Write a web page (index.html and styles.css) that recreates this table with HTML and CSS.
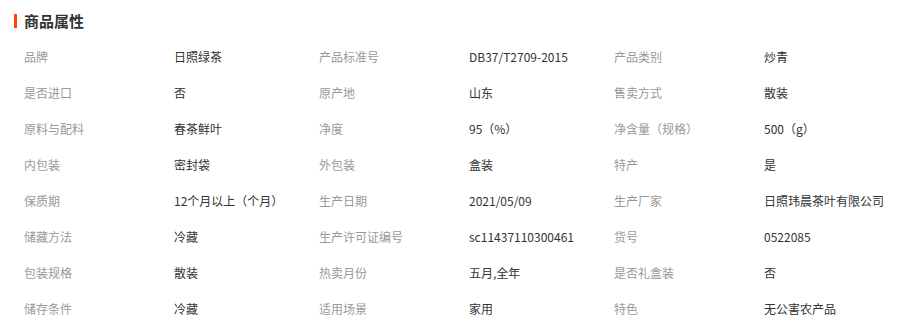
FILE: index.html
```html
<!DOCTYPE html>
<html lang="zh-CN">
<head>
<meta charset="utf-8">
<title>商品属性</title>
<link rel="stylesheet" href="styles.css">
</head>
<body>
<section class="attrs">
  <h2 class="attrs-title">商品属性</h2>
  <div class="attrs-grid">
    <span class="k">品牌</span><span class="v">日照绿茶</span>
    <span class="k">产品标准号</span><span class="v">DB37/T2709-2015</span>
    <span class="k">产品类别</span><span class="v">炒青</span>

    <span class="k">是否进口</span><span class="v">否</span>
    <span class="k">原产地</span><span class="v">山东</span>
    <span class="k">售卖方式</span><span class="v">散装</span>

    <span class="k">原料与配料</span><span class="v">春茶鲜叶</span>
    <span class="k">净度</span><span class="v">95（%）</span>
    <span class="k">净含量（规格）</span><span class="v">500（g）</span>

    <span class="k">内包装</span><span class="v">密封袋</span>
    <span class="k">外包装</span><span class="v">盒装</span>
    <span class="k">特产</span><span class="v">是</span>

    <span class="k">保质期</span><span class="v">12个月以上（个月）</span>
    <span class="k">生产日期</span><span class="v">2021/05/09</span>
    <span class="k">生产厂家</span><span class="v">日照玮晨茶叶有限公司</span>

    <span class="k">储藏方法</span><span class="v">冷藏</span>
    <span class="k">生产许可证编号</span><span class="v">sc11437110300461</span>
    <span class="k">货号</span><span class="v">0522085</span>

    <span class="k">包装规格</span><span class="v">散装</span>
    <span class="k">热卖月份</span><span class="v">五月,全年</span>
    <span class="k">是否礼盒装</span><span class="v">否</span>

    <span class="k">储存条件</span><span class="v">冷藏</span>
    <span class="k">适用场景</span><span class="v">家用</span>
    <span class="k">特色</span><span class="v">无公害农产品</span>
  </div>
</section>
</body>
</html>
```

FILE: styles.css
```css
html, body {
  margin: 0;
  padding: 0;
  background: #fff;
}
body {
  font-family: "Noto Sans CJK SC", "Microsoft YaHei", sans-serif;
  font-size: 12px;
  color: #333;
}
.attrs {
  padding: 13px 0 0 14px;
}
.attrs-title {
  margin: 0;
  display: flex;
  align-items: center;
  gap: 7px;
  font-size: 15px;
  font-weight: bold;
  line-height: 15px;
  color: #333;
}
.attrs-title::before {
  content: "";
  display: block;
  width: 3px;
  height: 14px;
  background: #ff4400;
}
.attrs-grid {
  display: grid;
  grid-template-columns: 150px 145px 150px 145px 150px 1fr;
  grid-auto-rows: 36px;
  align-items: center;
  margin-top: 10px;
  padding-left: 10px;
}
.k {
  color: #999;
  white-space: nowrap;
}
.v {
  color: #333;
  white-space: nowrap;
}
```
